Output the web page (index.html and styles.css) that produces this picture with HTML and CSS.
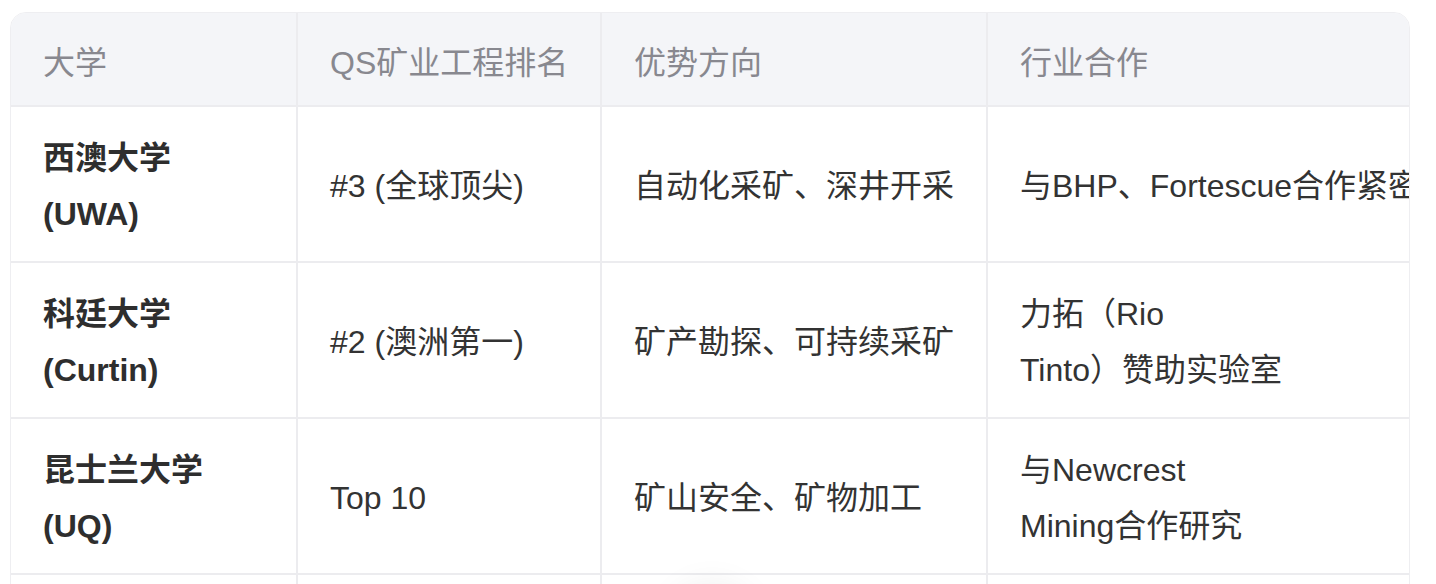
FILE: index.html
```html
<!DOCTYPE html>
<html lang="zh-CN">
<head>
<meta charset="utf-8">
<title>澳大利亚矿业工程大学</title>
<link rel="stylesheet" href="styles.css">
</head>
<body>
<div class="table-wrap">
  <table class="uni-table">
    <colgroup>
      <col class="col-uni">
      <col class="col-rank">
      <col class="col-focus">
      <col class="col-coop">
    </colgroup>
    <thead>
      <tr>
        <th>大学</th>
        <th>QS矿业工程排名</th>
        <th>优势方向</th>
        <th>行业合作</th>
      </tr>
    </thead>
    <tbody>
      <tr>
        <td class="uni">西澳大学<br>(UWA)</td>
        <td>#3 (全球顶尖)</td>
        <td>自动化采矿、深井开采</td>
        <td class="nowrap">与BHP、Fortescue合作紧密</td>
      </tr>
      <tr>
        <td class="uni">科廷大学<br>(Curtin)</td>
        <td>#2 (澳洲第一)</td>
        <td>矿产勘探、可持续采矿</td>
        <td>力拓（Rio <span class="keep">Tinto）赞助实验室</span></td>
      </tr>
      <tr>
        <td class="uni">昆士兰大学<br>(UQ)</td>
        <td>Top 10</td>
        <td>矿山安全、矿物加工</td>
        <td>与Newcrest <span class="keep">Mining合作研究</span></td>
      </tr>
      <tr class="next-row">
        <td></td>
        <td></td>
        <td></td>
        <td></td>
      </tr>
    </tbody>
  </table>
</div>
<div class="fab-shadow"></div>
</body>
</html>
```

FILE: styles.css
```css
html, body {
  margin: 0;
  padding: 0;
  background: #ffffff;
  overflow: hidden;
}

body {
  font-family: "Liberation Sans", "Noto Sans CJK SC", sans-serif;
  color: #333333;
}

.table-wrap {
  margin: 12px 26px 0 10px;
  border: 1px solid #eeeef1;
  border-radius: 16px;
  overflow: hidden;
}

.uni-table {
  border-collapse: separate;
  border-spacing: 0;
  table-layout: fixed;
  width: 1433px;
}

.col-uni { width: 287px; }
.col-rank { width: 304px; }
.col-focus { width: 386px; }
.col-coop { width: 456px; }

.uni-table th,
.uni-table td {
  font-size: 32px;
  line-height: 56px;
  text-align: left;
  vertical-align: middle;
  padding: 23px 32px 19px;
  border-right: 2px solid #ececef;
  border-bottom: 2px solid #ececef;
  word-break: keep-all;
}

.uni-table th {
  background: #f4f5f8;
  color: #88888f;
  font-weight: 400;
  padding-top: 22px;
  padding-bottom: 14px;
}

.uni-table td.uni {
  font-weight: 600;
  color: #2e2e2e;
}

.uni-table td.nowrap,
.keep {
  white-space: nowrap;
}

.next-row td {
  height: 112px;
}

.fab-shadow {
  position: fixed;
  left: 672px;
  top: 588px;
  width: 80px;
  height: 80px;
  border-radius: 50%;
  background: #ffffff;
  box-shadow: 0 0 36px rgba(0, 0, 0, 0.09);
}
```
